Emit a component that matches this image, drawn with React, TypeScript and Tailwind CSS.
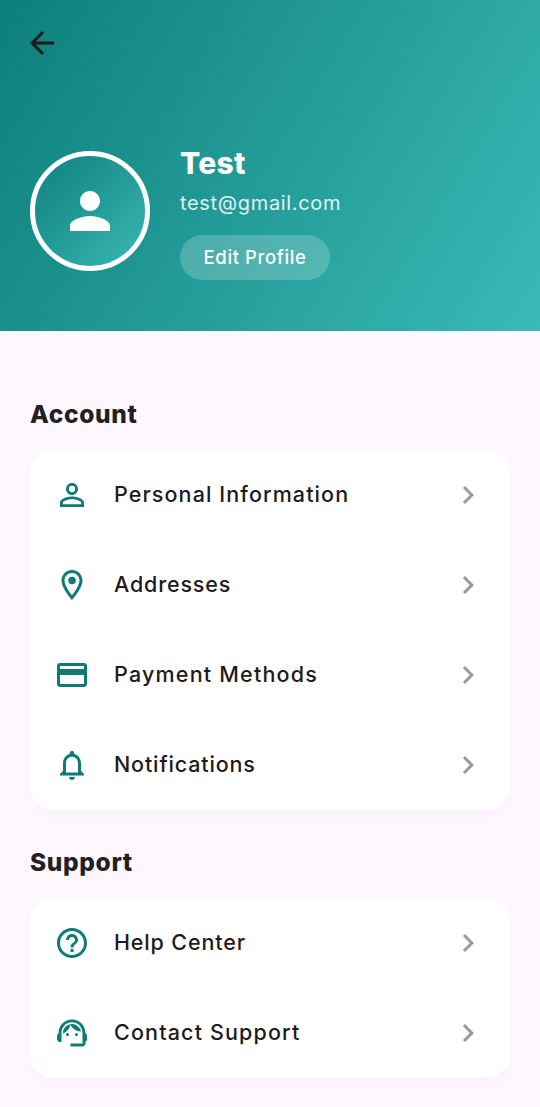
import type { IconType } from "react-icons";
import {
  MdArrowBack,
  MdPerson,
  MdOutlinePersonOutline,
  MdOutlineLocationOn,
  MdOutlinePayment,
  MdNotificationsNone,
  MdHelpOutline,
  MdSupportAgent,
  MdChevronRight,
} from "react-icons/md";

type Item = { icon: IconType; label: string; tracking: string };

const account: Item[] = [
  { icon: MdOutlinePersonOutline, label: "Personal Information", tracking: "tracking-[1.09px]" },
  { icon: MdOutlineLocationOn, label: "Addresses", tracking: "tracking-[0.85px]" },
  { icon: MdOutlinePayment, label: "Payment Methods", tracking: "tracking-[1.2px]" },
  { icon: MdNotificationsNone, label: "Notifications", tracking: "tracking-[0.85px]" },
];

const support: Item[] = [
  { icon: MdHelpOutline, label: "Help Center", tracking: "tracking-[0.85px]" },
  { icon: MdSupportAgent, label: "Contact Support", tracking: "tracking-[1.15px]" },
];

function Row({ icon: Icon, label, tracking }: Item) {
  return (
    <li>
      <button className="flex h-[90px] w-full items-center pr-6 pl-6 text-left">
        <Icon className="size-9 shrink-0 text-[#0d7c74]" />
        <span className={`ml-6 flex-1 pb-0.5 text-[21.5px] leading-8 font-medium text-[#1d1b20] ${tracking}`}>
          {label}
        </span>
        <MdChevronRight className="size-9 shrink-0 text-[#9a9a9a]" />
      </button>
    </li>
  );
}

function Section({ title, items }: { title: string; items: Item[] }) {
  return (
    <section>
      <h2 className="h-9 text-[24.5px] leading-9 font-extrabold tracking-[0.65px] text-[#212121]">{title}</h2>
      <ul className="mt-[18px] rounded-3xl bg-white shadow-[0_6px_15px_rgba(0,0,0,0.025)]">
        {items.map((item) => (
          <Row key={item.label} {...item} />
        ))}
      </ul>
    </section>
  );
}

export default function App() {
  return (
    <div className="h-[1107px] w-[540px] overflow-hidden bg-[#fef7ff] font-['Inter',sans-serif]">
      <header className="flex h-[331px] flex-col bg-[linear-gradient(121.5deg,#0d7f7b,#3ab9b7)] pt-[25px]">
        <button aria-label="Back" className="ml-6 size-9 text-[#1d1b20]">
          <MdArrowBack className="size-9" />
        </button>
        <div className="mt-[85px] flex px-[30px]">
          <div className="mt-[5px] flex size-[120px] items-center justify-center rounded-full border-5 border-white bg-[linear-gradient(135deg,#0d7f7b,#3ab9b7)] bg-origin-border">
            <MdPerson className="size-[60px] shrink-0 text-white" />
          </div>
          <div className="ml-[30px] text-white">
            <h1 className="mt-[-5px] text-[30px] leading-[45px] font-extrabold tracking-[0.3px]">Test</h1>
            <p className="mt-[2px] text-[20px] leading-[30px] tracking-[0.67px] text-white/85">test@gmail.com</p>
            <button className="mt-[17px] h-[45px] w-[150px] rounded-full bg-white/20 text-[18.5px] font-medium tracking-[0.6px]">
              Edit Profile
            </button>
          </div>
        </div>
      </header>
      <main className="flex flex-col gap-[34px] px-[30px] pt-[65px]">
        <Section title="Account" items={account} />
        <Section title="Support" items={support} />
      </main>
    </div>
  );
}
